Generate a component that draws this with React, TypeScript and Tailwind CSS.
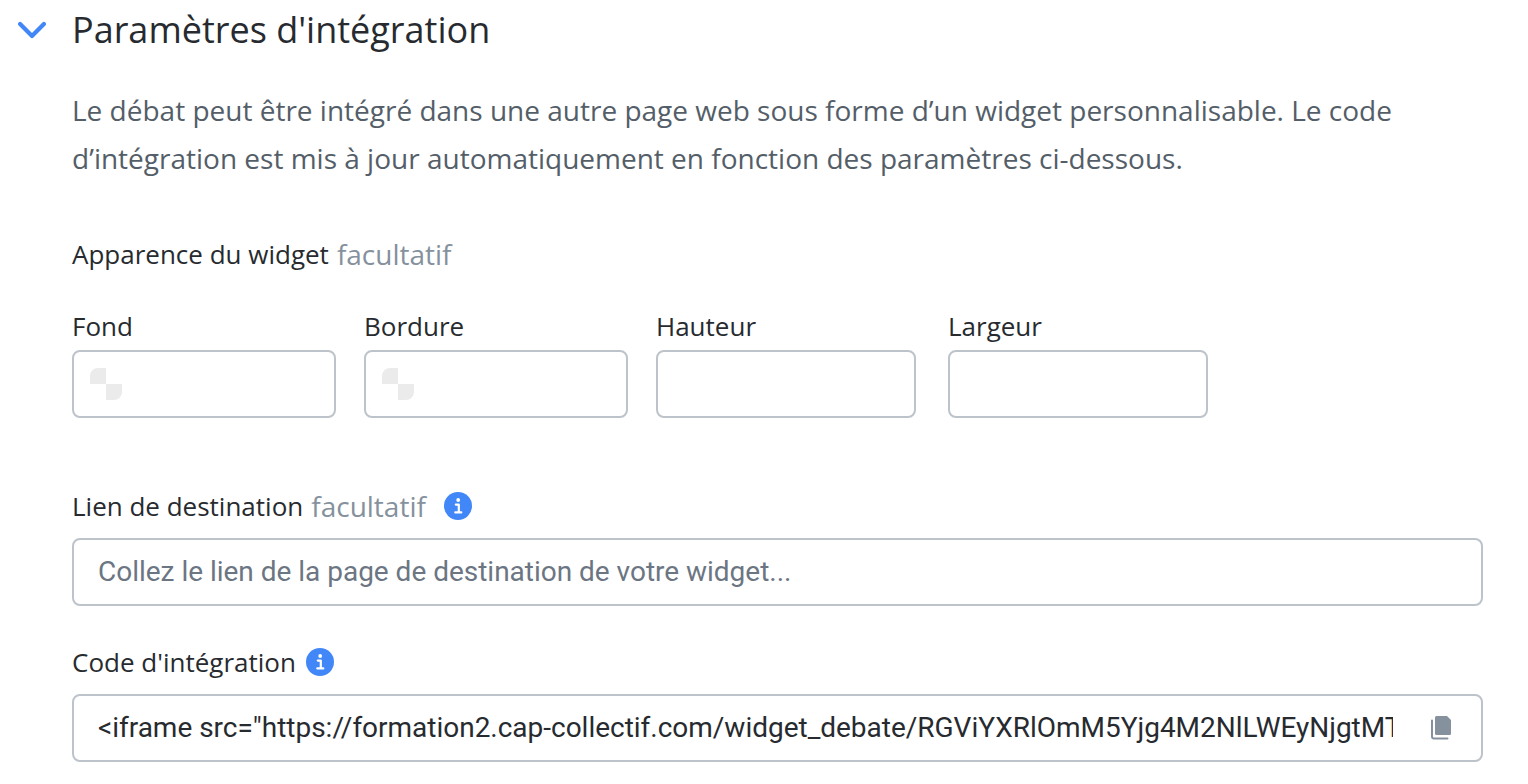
import type { ReactNode } from "react";

const inputBox = "h-[68px] rounded-lg border-2 border-[#bdc3ca] bg-white";
const inputText = "font-[Roboto,sans-serif] text-[28px] tracking-[-0.015px]";

function InfoIcon() {
    return (
        <svg width="28" height="28" viewBox="0 0 28 28" className="shrink-0">
            <circle cx="14" cy="14" r="14" fill="#4187f7" />
            <circle cx="14.2" cy="8" r="1.9" fill="#fff" />
            <path
                d="M11.8 12.6h3v7.4M11.3 20.4h6"
                fill="none"
                stroke="#fff"
                strokeWidth="2.2"
                strokeLinecap="round"
                strokeLinejoin="round"
            />
        </svg>
    );
}

function EmptyColor() {
    return (
        <svg width="32" height="32" viewBox="0 0 32 32">
            <path d="M8 0h8v16H0V8a8 8 0 0 1 8-8zM16 16h16v8a8 8 0 0 1-8 8h-8z" fill="#ebebeb" />
        </svg>
    );
}

function Field({ label, className, children }: { label: string; className: string; children?: ReactNode }) {
    return (
        <div className={className}>
            <div className="h-[39px] text-[26px] leading-[30px]">{label}</div>
            <div className={`${inputBox} flex items-center px-4`}>{children}</div>
        </div>
    );
}

export default function App() {
    return (
        <main className="h-[784px] w-[1528px] overflow-hidden bg-white pl-[72px] font-['Open_Sans',sans-serif] text-[#272b30]">
            <div className="-ml-[54px] flex h-[60px] items-center gap-[26px]">
                <svg width="28" height="18" viewBox="0 0 28 18" fill="none" stroke="#4187f7" strokeWidth="4.2">
                    <path d="M2.1 3l11.900 11.900L25.900 3" strokeLinecap="round" strokeLinejoin="round" />
                </svg>
                <h1 className="text-[36px] leading-[60px] whitespace-nowrap">Paramètres d'intégration</h1>
            </div>

            <p className="mt-[26px] text-[28px] leading-[48px] whitespace-nowrap text-[#545e68]">
                Le débat peut être intégré dans une autre page web sous forme d’un widget personnalisable. Le code
                <br />
                d’intégration est mis à jour automatiquement en fonction des paramètres ci-dessous.
            </p>

            <div className="mt-[57px] flex h-[30px] items-center gap-2 text-[26px] leading-[30px]">
                <span>Apparence du widget</span>
                <span className="text-[28px] text-[#85919d]">facultatif</span>
            </div>

            <div className="mt-[42px] flex">
                <Field label="Fond" className="mr-7 w-[264px]"><EmptyColor /></Field>
                <Field label="Bordure" className="mr-7 w-[264px]"><EmptyColor /></Field>
                <Field label="Hauteur" className="mr-8 w-[260px]" />
                <Field label="Largeur" className="w-[260px]" />
            </div>

            <div className="mt-[73px] flex h-[30px] items-center text-[26px] leading-[30px]">
                <span>Lien de destination</span>
                <span className="mr-[18px] ml-2 text-[28px] text-[#85919d]">facultatif</span>
                <InfoIcon />
            </div>
            <div className={`${inputBox} ${inputText} mt-[17px] flex w-[1411px] items-center px-6 text-[#6c7683]`}>
                Collez le lien de la page de destination de votre widget...
            </div>

            <div className="mt-[41px] flex h-[30px] items-center gap-[10px] text-[26px] leading-[30px]">
                <span>Code d'intégration</span>
                <InfoIcon />
            </div>
            <div className={`${inputBox} ${inputText} mt-[17px] flex w-[1411px] items-center px-6`}>
                <div className="w-[1295px] overflow-hidden whitespace-nowrap">
                    {'<iframe src="https://formation2.cap-collectif.com/widget_debate/RGViYXRlOmM5Yjg4M2NlLWEyNjgtMT'}
                </div>
                <svg className="ml-[37px] shrink-0" width="22" height="26" viewBox="0 0 22 26" fill="#85919d">
                    <path d="M6.5 1H17l4 4v13.500a1.500 1.500 0 0 1-1.500 1.500h-13A1.500 1.500 0 0 1 5 18.500v-16A1.500 1.500 0 0 1 6.500 1z" />
                    <path
                        d="M2 5.500V21.500a2 2 0 0 0 2 2H17.500"
                        fill="none"
                        stroke="#85919d"
                        strokeWidth="2"
                        strokeLinecap="round"
                    />
                </svg>
            </div>
        </main>
    );
}
